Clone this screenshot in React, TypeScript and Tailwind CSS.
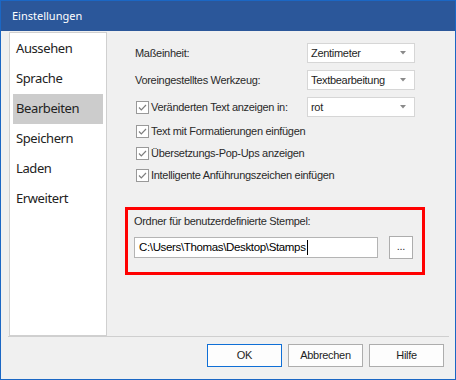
import React from "react";

const sans = "font-['Liberation_Sans',Arial,sans-serif]";

const Check = () => (
  <svg width="13" height="13" viewBox="0 0 13 13" className="shrink-0">
    <rect x="0.5" y="0.5" width="12" height="12" fill="#fff" stroke="#999999" />
    <path d="M3 6.5 L5.3 8.8 L10 4" fill="none" stroke="#7d7d7d" strokeWidth="1.2" />
  </svg>
);

const Combo = ({ value }: { value: string }) => (
  <div className="w-[108px] h-[20px] bg-white border border-[#d6d6d6] flex items-center justify-between pl-[3px] pr-[8px] text-[#1e1e1e]">
    <span>{value}</span>
    <svg width="6" height="4" viewBox="0 0 6 4">
      <path d="M0 0 H6 L3 3.5 Z" fill="#8a8a8a" />
    </svg>
  </div>
);

const navItems = ["Aussehen", "Sprache", "Bearbeiten", "Speichern", "Laden", "Erweitert"];

export default function App() {
  return (
    <div className="w-[456px] h-[380px] bg-[#f0f0f0] border-x border-b border-t border-[#1b67c4] flex flex-col overflow-hidden">
      {/* Title bar */}
      <div className="h-[30px] bg-[#2b579a] flex items-center pl-[11px] text-white text-[11px] font-['Noto_Sans',sans-serif]">
        Einstellungen
      </div>

      {/* Body */}
      <div className="h-[305px] flex">
        <div className="ml-2 mt-px w-[98px] h-[304px] bg-white border border-[#d0d0d0] px-[3px] pt-px font-['Noto_Sans',sans-serif] text-[13px] tracking-[-0.4px] text-[#222]">
          {navItems.map((item) => (
            <div
              key={item}
              className={
                "h-[30px] flex items-center pl-[3px] " +
                (item === "Bearbeiten" ? "bg-[#cccccc]" : "")
              }
            >
              {item}
            </div>
          ))}
        </div>

        <div className={`flex flex-col pl-[28px] text-[11px] tracking-[-0.3px] text-[#2a2a2a] ${sans}`}>
          <div className="mt-[12px] h-[20px] flex items-center">
            <span className="w-[172px]">Maßeinheit:</span>
            <Combo value="Zentimeter" />
          </div>
          <div className="mt-[7px] h-[20px] flex items-center">
            <span className="w-[172px]">Voreingestelltes Werkzeug:</span>
            <Combo value="Textbearbeitung" />
          </div>
          <div className="mt-[7px] h-[20px] flex items-center">
            <span className="w-[172px] flex items-center gap-[2px] pl-px">
              <Check />
              Veränderten Text anzeigen in:
            </span>
            <Combo value="rot" />
          </div>
          <div className="mt-[3px] h-[22px] flex items-center gap-[2px] pl-px">
            <Check />
            Text mit Formatierungen einfügen
          </div>
          <div className="h-[22px] flex items-center gap-[2px] pl-px">
            <Check />
            Übersetzungs-Pop-Ups anzeigen
          </div>
          <div className="h-[22px] flex items-center gap-[2px] pl-px">
            <Check />
            Intelligente Anführungszeichen einfügen
          </div>

          <div className="mt-[21px] -ml-[10px] w-[300px] h-[68px] border-[3px] border-[#ff0000] pl-[6px] pt-[4px]">
            <div className="h-[14px] leading-[14px]">Ordner für benutzerdefinierte Stempel:</div>
            <div className="mt-[8px] flex items-center gap-[11px]">
              <div className="w-[244px] h-[21px] bg-white border border-[#b4b4b4] flex items-center pl-[4px] text-[11.5px] tracking-[-0.35px] text-black">
                C:\Users\Thomas\Desktop\Stamps
                <span className="w-px h-[15px] bg-black ml-px" />
              </div>
              <div className="w-[24px] h-[23px] bg-white border border-[#adadad] flex items-center justify-center text-[#333] leading-none pb-[2px]">
                ...
              </div>
            </div>
          </div>
        </div>
      </div>

      {/* Footer */}
      <div className={`ml-[7px] mr-[6px] border-t border-[#cfcfcf] flex justify-end gap-[6px] pt-[7px] pr-[5px] text-[11px] tracking-[-0.3px] text-[#1e1e1e] ${sans}`}>
        <button className="w-[75px] h-[23px] bg-[#fdfdfd] border border-[#0f6fd6]">OK</button>
        <button className="w-[75px] h-[23px] bg-[#fdfdfd] border border-[#adadad]">Abbrechen</button>
        <button className="w-[75px] h-[23px] bg-[#fdfdfd] border border-[#adadad]">Hilfe</button>
      </div>
    </div>
  );
}
